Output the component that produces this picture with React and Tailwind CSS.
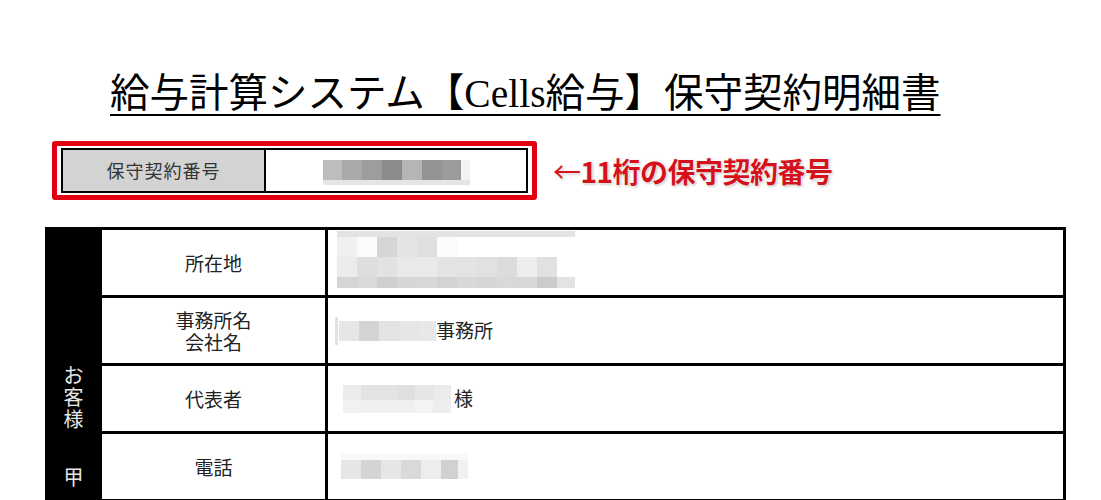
const jp = "font-['Noto_Sans_CJK_JP',sans-serif]";

// pixel mosaics that stand in for the blurred values
const contractNo = [
  [[19, "#bdbdbd"], [20, "#a9a9a9"], [20, "#9d9d9f"], [20, "#8c8c8b"], [20, "#b5b5b5"], [20, "#939395"], [19, "#9b9b9b"], [9, "#f2f3f6"]],
  [[147, "#e5e5e5"]],
];
const contractH = [20, 5];

const address = [
  [[238, "#e3e3e3"]],
  [[20, "#f0f0f0"], [20, "#fcfafa"], [20, "#d6d6d6"], [20, "#e4e4e4"], [20, "#dfdfdf"], [20, "#fafbfd"]],
  ["#ececec", "#dedee0", "#e3e2e2", "#e9e9e9", "#e9e9e9", "#e4e4e6", "#e3e3e3", "#e1e1e1", "#dcdcdc", "#efeeee", "#e1e1e1"].map((c) => [20, c]),
  ["#d5d5d5", "#d9d9d9", "#cfcfcf", "#d6d6d6", "#d8d8d8", "#d3d3d3", "#d8d8d8", "#d6d6d6", "#d9d9d9", "#d8d8d8", "#cbcbcb", "#e3e3e3"].map((c, i) => [i === 11 ? 18 : 20, c]),
];
const addressH = [6, 20, 20, 11];

const company = [[[20, "#e6e6e6"], [20, "#d3d3d3"], [20, "#e3e3e3"], [20, "#e6e6e6"], [17, "#e8e8e8"]]];
const person = [
  ["#ebebeb", "#e3e3e3", "#e3e3e3", "#dfdfdf", "#e6e6e6", "#ebebeb"].map((c) => [18, c]),
  ["#f1f1f1", "#efefef", "#efefef", "#efefef", "#f3f3f3", "#eeeeee"].map((c) => [18, c]),
];
const phone = [
  [[127, "#f8f8f8"]],
  [[20, "#e6e6e6"], [20, "#d4d4d4"], [20, "#e6e6e6"], [20, "#d9d9d9"], [20, "#ededed"], [17, "#d1d1d3"], [10, "#f1f1f3"]],
];

const Mosaic = ({ rows, heights }) => (
  <div className="flex flex-col">
    {rows.map((row, r) => (
      <div key={r} className="flex">
        {row.map(([w, c], i) => (
          <div key={i} style={{ width: w, height: heights[r], backgroundColor: c }} />
        ))}
      </div>
    ))}
  </div>
);

const Row = ({ label, children, last }) => (
  <div className={`grid grid-cols-[226px_1fr] h-[68px] ${last ? "" : "border-b-[3px] border-black"}`}>
    <div className={`flex items-center justify-center text-center border-r-[3px] border-black text-[19px] leading-[22px] text-[#222] ${jp}`}>
      {label}
    </div>
    <div className={`flex items-center pl-[9px] text-[19px] text-[#222] ${jp}`}>{children}</div>
  </div>
);

const App = () => {
  return (
    <div className="w-[1101px] h-[500px] overflow-hidden bg-white">
      {/* タイトル */}
      <div className="pt-[74px] pl-[110px]">
        <h1 className="inline-block text-[39.5px] leading-[40px] text-black font-normal font-['Liberation_Serif','Noto_Sans_CJK_JP',serif] underline decoration-[2px] underline-offset-[7px]">
          給与計算システム【Cells給与】保守契約明細書
        </h1>
      </div>

      {/* 保守契約番号 */}
      <div className="flex items-center mt-[27px] ml-[52px]">
        <div className="w-[485px] h-[59px] border-[5px] border-[#e00012] rounded-[3px] px-[4px] py-[2px]">
          <div className="flex h-full border-2 border-black">
            <div className={`w-[203px] bg-[#d3d3d3] border-r-2 border-black flex items-center justify-center text-[18px] tracking-[1px] text-[#333] ${jp}`}>
              保守契約番号
            </div>
            <div className="flex-1 flex items-center justify-center pt-[3px]">
              <Mosaic rows={contractNo} heights={contractH} />
            </div>
          </div>
        </div>
        <p className={`ml-[16px] text-[28px] font-bold text-[#d4121c] tracking-[-0.5px] [text-shadow:0_0_2px_#fff,0_0_2px_#fff,1px_1px_3px_rgba(0,0,0,0.35)] ${jp}`}>
          <span className="font-normal">←</span>11桁の保守契約番号
        </p>
      </div>

      {/* お客様情報 */}
      <div className="mt-[27px] ml-[45px] w-[1021px] flex border-t-[3px] border-r-[3px] border-black">
        <div className={`w-[57px] bg-black flex flex-col items-center pt-[134px] text-[20px] leading-[22px] text-[#e6e6e6] ${jp}`}>
          <span>お</span>
          <span>客</span>
          <span>様</span>
          <span className="mt-[36px]">甲</span>
        </div>
        <div className="flex-1 flex flex-col">
          <Row label="所在地">
            <div className="self-start pt-[1px]">
              <Mosaic rows={address} heights={addressH} />
            </div>
          </Row>
          <Row
            label={
              <span>
                事務所名
                <br />
                会社名
              </span>
            }
          >
            <div className="w-[3px] h-[28px] bg-[#e2e2e2] -ml-[2px] mr-[1px]" />
            <Mosaic rows={company} heights={[20]} />
            <span>事務所</span>
          </Row>
          <Row label="代表者">
            <div className="ml-[6px] mr-[3px]">
              <Mosaic rows={person} heights={[15, 13]} />
            </div>
            <span>様</span>
          </Row>
          <Row label="電話">
            <div className="ml-[4px]">
              <Mosaic rows={phone} heights={[6, 19]} />
            </div>
          </Row>
        </div>
      </div>
    </div>
  );
};

export default App;
